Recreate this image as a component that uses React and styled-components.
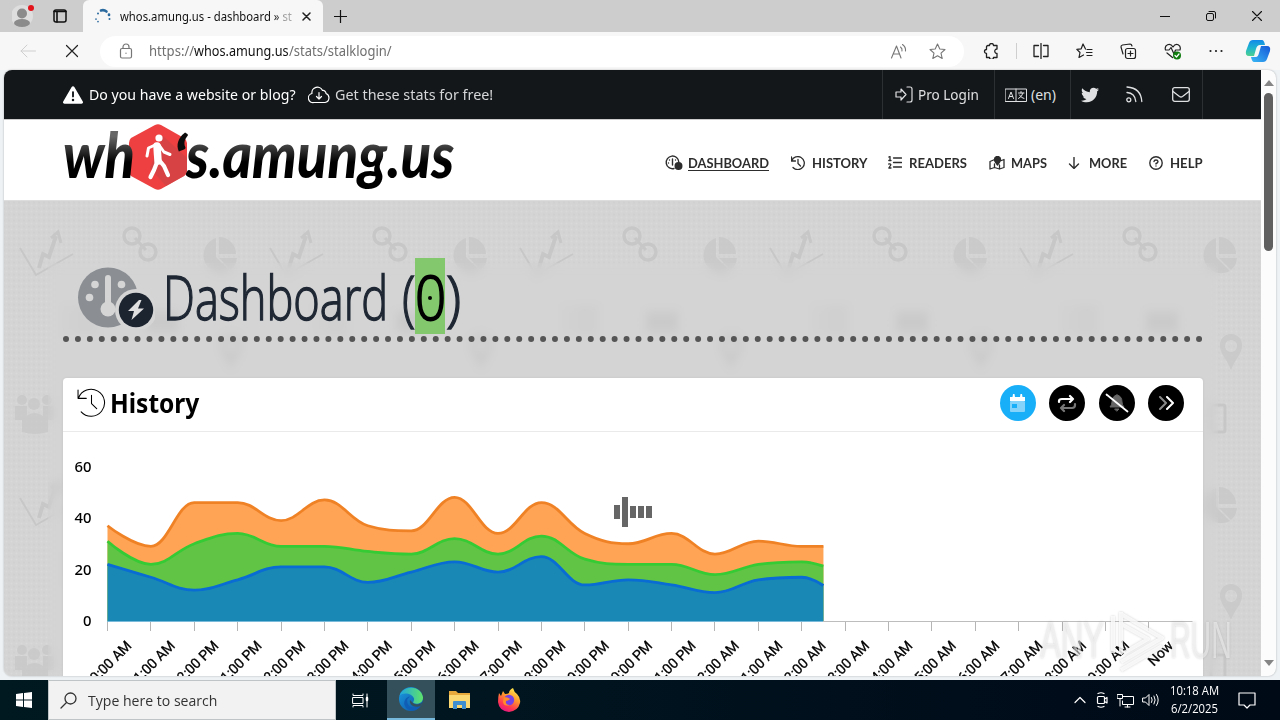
import React, { useLayoutEffect, useRef, useState } from "react";
import styled, { createGlobalStyle } from "styled-components";
import { FaTriangleExclamation, FaTwitter } from "react-icons/fa6";

const GlobalStyle = createGlobalStyle`
  * { box-sizing: border-box; }
  body { margin: 0; overflow: hidden; font-family: "Noto Sans", "Open Sans", sans-serif; }
  svg { display: block; flex: none; }
`;

/* ---------- text fitted to a given width ---------- */
const FitBox = styled.span`
  display: inline-block;
  flex: none;
  width: ${(p) => p.$w}px;
  white-space: nowrap;
`;
const FitInner = styled.span`
  display: inline-block;
  transform-origin: 0 50%;
`;
function Fit({ w, children, className }) {
  const ref = useRef(null);
  const [k, setK] = useState(1);
  useLayoutEffect(() => {
    setK(w / ref.current.offsetWidth);
  }, [w]);
  return (
    <FitBox $w={w} className={className}>
      <FitInner ref={ref} style={{ transform: `scaleX(${k})` }}>{children}</FitInner>
    </FitBox>
  );
}

const Ico = ({ w = 16, h = w, vb = `0 0 ${w} ${h}`, sw = 1, c = "currentColor", children }) => (
  <svg width={w} height={h} viewBox={vb} fill="none" stroke={c} strokeWidth={sw} strokeLinecap="round" strokeLinejoin="round">
    {children}
  </svg>
);

/* ---------- browser frame ---------- */
const Screen = styled.div`
  width: 1280px; height: 720px; overflow: hidden; position: relative;
  display: flex; flex-direction: column; background: #eff2f5;
`;
const TabStrip = styled.div`
  height: 32px; flex: none; background: #cdcdcd; display: flex; align-items: stretch;
`;
const StripLeft = styled.div`
  width: 83px; display: flex; align-items: center; padding-left: 12px; gap: 19px;
`;
const Tab = styled.div`
  width: 240px; background: #f7f7f7; border-radius: 6px 6px 0 0; display: flex; align-items: center;
  padding: 0 11px 0 11px; font-size: 12px; color: #111;
`;
const TabTitle = styled(Fit)`
  margin-left: 9px; margin-right: 10px;
  -webkit-mask-image: linear-gradient(90deg, #000 90%, rgba(0,0,0,.35) 96%);
`;
const StripRest = styled.div`
  flex: 1; display: flex; align-items: center; justify-content: space-between; padding: 0 18px 0 11px;
`;
const WinButtons = styled.div`display: flex; align-items: center; gap: 36px;`;
const Toolbar = styled.div`
  height: 38px; flex: none; background: #f7f7f7; display: flex; align-items: center; padding: 0 9px 0 20px;
`;
const NavButtons = styled.div`width: 80px; display: flex; gap: 29px; align-items: center; color: #222;`;
const Address = styled.div`
  width: 864px; height: 31px; border-radius: 16px; background: #fff; display: flex; align-items: center;
  padding: 0 18px 0 19px; color: #767676; font-size: 14px;
`;
const UrlPart = styled(Fit)`color: ${(p) => (p.$strong ? "#111" : "#6f6f6f")};`;
const Url = styled.div`display: flex; margin-left: 16px; margin-top: -1px;`;
const AddressTools = styled.div`margin-left: auto; display: flex; gap: 22px; align-items: center;`;
const ToolIcons = styled.div`flex: 1; display: flex; align-items: center; gap: 27px; padding-left: 19px; color: #222;`;
const ToolRule = styled.div`width: 1px; height: 16px; background: #cfcfcf; margin: 0 -11px 0 -10px;`;
const CopilotSlot = styled.span`margin-left: -5px;`;

/* ---------- page ---------- */
const Viewport = styled.div`
  height: 606px; margin: 0 4px 4px; flex: none; display: flex; border-radius: 8px; overflow: hidden; background: #fcfcfc;
  box-shadow: 0 0 2px rgba(0,0,0,.3);
`;
const Page = styled.div`width: 1257px; height: 606px; overflow: hidden; display: flex; flex-direction: column;`;
const Scrollbar = styled.div`
  width: 15px; display: flex; flex-direction: column; align-items: center; padding: 10px 0;
`;
const Thumb = styled.div`width: 9px; height: 158px; margin-top: 7px; border-radius: 5px; background: #606060;`;
const Arrow = styled.div`
  border: 5px solid transparent; border-top-width: 0; border-bottom: 6px solid #858585;
  ${(p) => p.$down && "transform: rotate(180deg); margin-top: auto;"}
`;
const TopBar = styled.div`
  height: 49px; flex: none; background: #13171a; color: #fff; display: flex; padding: 0 58px 0 59px; font-size: 14px;
`;
const Promo = styled.div`flex: 1; display: flex; align-items: center;`;
const PromoText = styled(Fit)`margin: 0 ${(p) => p.$mr || 0}px 0 ${(p) => p.$ml}px; color: ${(p) => p.$c};`;
const TopCell = styled.div`
  width: ${(p) => p.$w}px; border-left: 1px solid #2c3033; display: flex; align-items: center;
  padding-left: ${(p) => p.$pl}px; gap: ${(p) => p.$gap}px; color: #dfe0e1;
  ${(p) => p.$last && "border-right: 1px solid #2c3033;"}
`;
const Masthead = styled.div`
  height: 82px; flex: none; background: #fff; border-top: 1px solid #ccc; border-bottom: 1px solid #ddd;
  display: flex; justify-content: space-between; padding: 0 58px 0 59px;
`;
const Logo = styled.div`
  display: flex; align-items: flex-start; font: italic 900 62px/80px Lato, sans-serif; height: 80px; color: #000;
`;
const LogoText = styled(Fit)`
  margin-left: ${(p) => p.$ml || 0}px; margin-top: ${(p) => p.$mt || 0}px;
  & > span {
    background: linear-gradient(180deg, #666 28%, #000 ${(p) => p.$stop || 60}%); -webkit-background-clip: text; background-clip: text; color: transparent;
  }
`;
const LogoTick = styled.span`
  width: 12px; margin: 7px 0 0 -14px; height: 22px; font-size: 62px; line-height: 62px; position: relative;
  overflow: visible; display: flex; justify-content: center; color: #0c0c0c;
`;
const Hexagon = styled.div`
  width: 60px; height: 66px; margin: 4px 0 0 -7px; display: grid; place-items: center; color: #fff;
  & > * { grid-area: 1 / 1; }
`;
const Nav = styled.nav`
  display: flex; gap: 21.6px; align-items: center; font: 700 13.5px/18px Lato, sans-serif; color: #2d2d2d; padding-top: 5px;
`;
const NavItem = styled.div`display: flex; align-items: center;`;
const NavIcon = styled.span`width: ${(p) => p.$w}px;`;
const NavLabel = styled(Fit)`border-bottom: 1px solid ${(p) => (p.$active ? "#2d2d2d" : "transparent")}; line-height: 14px; padding-top: 1px;`;

const Body = styled.div`
  flex: 1; background: #d5d5d5; position: relative; display: flex; flex-direction: column; align-items: center; padding-top: 62px;
`;
const Backdrop = styled.svg`position: absolute; inset: 0;`;
const Container = styled.div`
  width: 1170px; height: 413px; overflow: visible; padding: 0 15px; backdrop-filter: blur(5px); position: relative; margin-right: -1px;
`;
const Title = styled.div`
  height: 84px; margin-top: -5px; border-bottom: 6px dotted #555; display: flex; align-items: flex-start;
  padding-left: 14px; font: 300 60px/76px "Open Sans", sans-serif; color: #1e2733;
`;
const TitleIcon = styled.span`margin-top: 9px;`;
const TitleWord = styled(Fit)`margin: 1px ${(p) => p.$mr}px 0 ${(p) => p.$ml}px; height: 70px; -webkit-text-stroke: 1.4px currentColor;`;
const Count = styled.span`
  width: 30px; height: 76px; background: #83c86d; color: #000; display: grid; justify-content: center;
  & > * { grid-area: 1 / 1; }
  &::after { content: ""; grid-area: 1 / 1; width: 4px; height: 4px; border-radius: 2px; background: #000; margin: 38px auto 0; }
`;
const CountDigit = styled(Fit)`height: 70px; margin-top: 1px; -webkit-text-stroke: 1.8px #000;`;
const Card = styled.div`
  margin-top: 36px; height: 330px; background: #fff; border-radius: 4px; box-shadow: 0 0 3px rgba(0,0,0,.08);
`;
const CardHead = styled.div`
  height: 54px; border-bottom: 1px solid #eaeaea; display: flex; align-items: center; padding: 0 19px 0 14px; gap: 4px;
`;
const HeadIcon = styled.span`margin-top: -5px;`;
const CardTitle = styled(Fit)`font: 700 27px/40px "Noto Sans", sans-serif; color: #000; margin-top: -3px;`;
const Actions = styled.div`margin-left: auto; display: flex; gap: 13.4px; margin-top: -3px;`;
const Round = styled.div`
  width: 36px; height: 36px; border-radius: 50%; background: ${(p) => p.$bg || "#000"}; display: grid; place-items: center; color: #fff;
`;
const Watermark = styled.div`
  position: absolute; left: 1040px; top: 608px; display: flex; align-items: center; height: 66px;
  font: 400 51px/66px "Liberation Sans", sans-serif; color: rgba(255,255,255,.5);
  text-shadow: 0 0 3px rgba(120,120,120,.32);
`;
const WatermarkMark = styled.svg`filter: drop-shadow(0 0 1px rgba(110,110,110,.4));`;

/* ---------- taskbar ---------- */
const Taskbar = styled.div`
  height: 40px; flex: none; background: linear-gradient(90deg, #001820 0, #00151f 40%, #000d1a 75%, #000a17); display: flex; color: #fff;
`;
const TaskButton = styled.div`
  width: ${(p) => p.$w || 49}px; display: grid; place-items: center;
  ${(p) => p.$active && "background: #34505b; border-bottom: 2px solid #76b9dd;"}
`;
const Search = styled.div`
  width: 288px; background: #f2f2f2; border: 1px solid #bfc4c6; display: flex; align-items: center; padding-left: 11px; gap: 11px; color: #333;
  font: 14.5px "Open Sans", sans-serif;
`;
const Tray = styled.div`margin-left: auto; display: flex; align-items: center; padding-right: 24px;`;
const TrayIcons = styled.div`display: flex; align-items: center; gap: 8px; margin-right: 9px;`;
const Clock = styled.div`
  width: 50px; margin-right: 19px; display: flex; flex-direction: column; align-items: center; font: 12px/18px "Open Sans", sans-serif;
`;

/* ---------- chart ---------- */
const STEP = 43.39, X0 = 107.5, Y0 = 621, UNIT = 2.575;
const orange = [37, 29, 46, 46, 39, 47, 37, 35, 48, 34, 46, 34, 30, 34, 26, 31, 29, 29];
const green = [31, 22, 30, 34, 29, 29, 27, 26, 32, 26, 33, 24, 22, 22, 18, 22, 23, 21.3];
const blue = [22, 17, 12, 16, 21, 21, 15, 19, 23, 19, 25, 14, 16, 14, 11, 16, 17, 13.8];
const hours = ["10:00 AM", "11:00 AM", "12:00 PM", "1:00 PM", "2:00 PM", "3:00 PM", "4:00 PM", "5:00 PM", "6:00 PM", "7:00 PM",
  "8:00 PM", "9:00 PM", "10:00 PM", "11:00 PM", "12:00 AM", "1:00 AM", "2:00 AM", "3:00 AM", "4:00 AM", "5:00 AM", "6:00 AM",
  "7:00 AM", "8:00 AM", "9:00 AM", "Now"];

function spline(values) {
  const pts = values.map((v, i) => ({ x: X0 + STEP * (i === 17 ? 16.5 : i), y: Y0 - v * UNIT }));
  let d = `M${pts[0].x} ${pts[0].y}`;
  let prevR = pts[0];
  for (let i = 1; i < pts.length; i++) {
    const p = pts[i], a = pts[i - 1], b = pts[i + 1];
    let l = p, r = p;
    if (b) {
      l = { x: (1.5 * p.x + a.x) / 2.5, y: (1.5 * p.y + a.y) / 2.5 };
      r = { x: (1.5 * p.x + b.x) / 2.5, y: (1.5 * p.y + b.y) / 2.5 };
      const c = ((r.y - l.y) * (r.x - p.x)) / (r.x - l.x) + p.y - r.y;
      l.y += c; r.y += c;
      if (l.y > a.y && l.y > p.y) { l.y = Math.max(a.y, p.y); r.y = 2 * p.y - l.y; }
      else if (l.y < a.y && l.y < p.y) { l.y = Math.min(a.y, p.y); r.y = 2 * p.y - l.y; }
      if (r.y > b.y && r.y > p.y) { r.y = Math.max(b.y, p.y); l.y = 2 * p.y - r.y; }
      else if (r.y < b.y && r.y < p.y) { r.y = Math.min(b.y, p.y); l.y = 2 * p.y - r.y; }
    }
    d += `C${prevR.x} ${prevR.y} ${l.x} ${l.y} ${p.x} ${p.y}`;
    prevR = r;
  }
  return d;
}
function Series({ values, fill, line }) {
  const d = spline(values);
  return (
    <g>
      <path d={`${d}V${Y0}H${X0}Z`} fill={fill} />
      <path d={d} fill="none" stroke={line} strokeWidth="2.8" />
    </g>
  );
}
function Chart() {
  return (
    <svg width="1140" height="276" viewBox="63 432 1140 276">
      <Series values={orange} fill="#ffa355" line="#f08226" />
      <Series values={green} fill="#61c445" line="#35cb35" />
      <Series values={blue} fill="#1a88b5" line="#086cd4" />
      <path d="M107 621.5H1192.5" stroke="#bdbdbd" />
      <path d="M107 621.5H823" stroke="#79b9da" />
      {hours.map((_, i) => <path key={i} d={`M${Math.floor(X0 + i * STEP) + 0.5} 622V631`} stroke="#b5b5b5" />)}
      {[60, 40, 20, 0].map((v) => (
        <text key={v} x="91.5" y={Y0 - v * UNIT + 5} textAnchor="end" fontFamily="Noto Sans" fontSize="14" fontWeight="500" textLength={v ? 17 : 8.5} lengthAdjust="spacingAndGlyphs">{v}</text>
      ))}
      {hours.map((h, i) => (
        <text key={i} transform={`translate(${X0 + i * STEP + 25} 646.5) rotate(-45)`} textAnchor="end" fontFamily="Roboto" fontSize="14" fontWeight="400" stroke="#000" strokeWidth=".3">{h}</text>
      ))}
      <g fill="#666">
        <rect x="614" y="505" width="6" height="14" />
        <rect x="622" y="497" width="6" height="30" />
        <rect x="630" y="506" width="6" height="12" />
        <rect x="638" y="506" width="6" height="12" />
        <rect x="646" y="506" width="6" height="12" />
      </g>
    </svg>
  );
}

function BodyPattern() {
  return (
    <Backdrop width="1257" height="476" viewBox="4 201 1257 476">
      <defs>
        <pattern id="dots" width="5" height="6" patternUnits="userSpaceOnUse">
          <rect width="5" height="6" fill="#d4d4d4" />
          <circle cx="1.5" cy="1.5" r="1.1" fill="#d9d9d9" />
          <circle cx="4" cy="4.5" r="1.1" fill="#d0d0d0" />
        </pattern>
        <pattern id="tile" x="-1" y="200" width="250" height="250" patternUnits="userSpaceOnUse">
          <g fill="none" stroke="#c3c3c3" strokeWidth="2">
            <path d="M21 48L37 75L74 54" />
            <path d="M40 68L44 54L50 57L57 36" strokeWidth="4" />
            <path d="M52 38L59 32L62 43" strokeWidth="3" />
            <circle cx="133" cy="36" r="8" strokeWidth="3.5" />
            <circle cx="149" cy="52" r="8" strokeWidth="3.5" />
            <path d="M136 38L147 50" strokeWidth="3" />
          </g>
          <g fill="#c7c7c7">
            <path d="M217 57V38A18 18 0 1 0 231 71Z" />
            <path d="M220 37A17 17 0 0 1 237 54H220Z" />
            <path d="M220 58H238A17 17 0 0 1 232 70Z" />
            <path d="M232 134a11 11 0 0 1 11 12c0 8-7 13-11 24c-4-11-11-16-11-24a11 11 0 0 1 11-12zm0 6a6 6 0 1 0 .1 0z" fillRule="evenodd" />
            <path d="M147 112h32v20h-32z" />
            <path d="M65 108h6v4h-6zM75 108h24v4H75zM65 118h6v4h-6zM75 118h24v4H75zM65 128h6v4h-6zM75 128h24v4H75z" />
            <circle cx="23" cy="200" r="5" /><circle cx="35" cy="204" r="6" /><circle cx="48" cy="200" r="5" />
            <path d="M16 206h12v14H16zM44 206h11v14H44zM23 220q12-14 26 0v12q-13 4-26 0z" />
          </g>
          <rect x="212" y="205" width="14" height="27" rx="2" fill="none" stroke="#c3c3c3" strokeWidth="3" />
        </pattern>
      </defs>
      <rect x="4" y="200" width="1257" height="477" fill="url(#dots)" />
      <rect x="4" y="200" width="1257" height="477" fill="url(#tile)" opacity=".75" />
    </Backdrop>
  );
}

const HistoryGlyph = ({ s, sw }) => (
  <Ico w={s} vb="0 0 28 28" sw={sw}>
    <path d="M1 2V10H9M1.5 9.5A13 13 0 1 1 4 23M14 7V15L19 20" />
  </Ico>
);

const GaugeIcon = () => (
  <svg width="78" height="62" viewBox="77 267 78 62">
    <circle cx="108" cy="297.500" r="30" fill="#8b8f94" />
    <g fill="#d5d5d5">
      <circle cx="95" cy="284.500" r="3.8" /><circle cx="121.500" cy="284.500" r="3.800" /><circle cx="89.500" cy="297.500" r="3.800" />
      <circle cx="108" cy="309" r="7.500" /><rect x="105" y="275" width="6" height="32" rx="3" />
      <circle cx="136" cy="310" r="21" />
    </g>
    <circle cx="136" cy="310" r="17.200" fill="#1c2430" />
    <path d="M139 300L128 311H134L131.500 320L144 308.500H138L141.500 300Z" fill="#e0e0e0" />
  </svg>
);

const EdgeLogo = () => (
  <svg width="26" height="26" viewBox="0 0 26 26">
    <defs>
      <linearGradient id="e1" x1="0" x2="1"><stop offset="0" stopColor="#1fa5e0" /><stop offset="1" stopColor="#5fe36a" /></linearGradient>
      <linearGradient id="e2" x1="0" y1="0" x2="1" y2="1"><stop offset="0" stopColor="#1b9de2" /><stop offset="1" stopColor="#0d4da0" /></linearGradient>
    </defs>
    <circle cx="13" cy="13" r="12" fill="url(#e2)" />
    <path d="M1.500 10C4 0 22 -2 25 11C25.500 18 18 18.500 15.500 17C14.500 16 16.500 15 16 12.500C14 7 5 6 1.500 10Z" fill="url(#e1)" />
    <path d="M9.500 13C8 19 13 24 22 20.500C18 26 9 26 6.500 19C5.500 15 8 11 12 10.500Z" fill="#0f5db5" />
    <path d="M15 17C17 19 21 19 25 16.500L22.500 20C16 22 11 19 12 14Z" fill="#34505b" />
  </svg>
);

export default function App() {
  return (
    <Screen>
      <GlobalStyle />
      <TabStrip>
        <StripLeft>
          <svg width="22" height="24" viewBox="0 0 22 24">
            <circle cx="10" cy="12" r="11" fill="#dedede" />
            <circle cx="10" cy="9.500" r="5" fill="#8b8b8b" />
            <ellipse cx="10" cy="19" rx="8" ry="4" fill="#8b8b8b" />
            <circle cx="19" cy="4" r="3" fill="#e3131c" />
          </svg>
          <Ico w={14} sw={1.500} c="#111"><rect x="1" y="1" width="12" height="12" rx="2" /><path d="M1 2.500H13M4 3V13" strokeWidth="1.600" /></Ico>
        </StripLeft>
        <Tab>
          <svg width="17" height="16" viewBox="0 0 17 16" fill="none" stroke="#2b6a9f" strokeLinecap="round">
            <path d="M7 2.500Q10 1.500 12.500 3.500" strokeWidth="2.600" /><path d="M15 6.500V7" strokeWidth="2.600" />
            <path d="M15.500 11V11.100M4 5.500V5.600" strokeWidth="2" /><path d="M2 11V11.100M4 13.500V13.600" strokeWidth="1.700" />
          </svg>
          <TabTitle w={172}>whos.amung.us - dashboard » st</TabTitle>
          <Ico w={9} sw={1.500} c="#222"><path d="M1 1L8 8M8 1L1 8" /></Ico>
        </Tab>
        <StripRest>
          <Ico w={13} sw={1.200} c="#111"><path d="M6.500 0V13M0 6.500H13" /></Ico>
          <WinButtons>
            <Ico w={10} c="#111"><path d="M0 5.500H10" /></Ico>
            <Ico w={10} c="#111"><rect x=".5" y="2.500" width="7" height="7" rx="1.500" /><path d="M3 .5H8Q9.500 .5 9.500 2V7" /></Ico>
            <Ico w={10} c="#111" sw={1.100}><path d="M.5 .5L9.500 9.500M9.500 .5L.5 9.500" /></Ico>
          </WinButtons>
        </StripRest>
      </TabStrip>

      <Toolbar>
        <NavButtons>
          <Ico w={16} c="#cfcfcf"><path d="M15.500 8H1M7 2L1 8L7 14" /></Ico>
          <Ico w={14} sw={1.200}><path d="M1.500 1.500L12.500 12.500M12.500 1.500L1.500 12.500" /></Ico>
        </NavButtons>
        <Address>
          <Ico w={14} h={16} sw={1.200}><rect x="1.500" y="5.500" width="11" height="9.500" rx="1.500" /><path d="M4 5.500V4A3 3 0 0 1 10 4V5.500M7 10V10.300" /></Ico>
          <Url>
            <UrlPart w={45}>https://</UrlPart>
            <UrlPart w={95} $strong>whos.amung.us</UrlPart>
            <UrlPart w={103}>/stats/stalklogin/</UrlPart>
          </Url>
          <AddressTools>
            <Ico w={17} sw={1.100}><path d="M1.500 15L6.500 3L11 15M3 11H9.500M10.500 4Q12.500 5.500 12 8M12.500 1.500Q16 4 15.500 8" /></Ico>
            <Ico w={17} sw={1.100}><path d="M8.500 1L10.800 6L16 6.500L12 10.200L13.200 15.500L8.500 12.800L3.800 15.500L5 10.200L1 6.500L6.200 6Z" /></Ico>
          </AddressTools>
        </Address>
        <ToolIcons>
          <Ico w={16} sw={1.300}><path d="M5 2.500H6.500A2 2 0 0 1 10.500 2.500H14V6A2 2 0 1 0 14 10.500V14.500H10.500A2 2 0 0 1 6.500 14.500H3.500V10.500A2 2 0 1 1 3.500 6.500V4Q3.500 2.500 5 2.500Z" /></Ico>
          <ToolRule />
          <Ico w={16} sw={1.300}><path d="M5.500 2.500H1V13.500H5.500M10.500 2.500H15V13.500H10.500M8 .5V15.500" /></Ico>
          <Ico w={17} h={16} sw={1.200}><path d="M9.500 6L7 1L5.200 5.800L.8 6.300L4 9.500L3 14.500L7.500 12M11 6.500H16M10.500 9.500H16M11 12.500H16" /></Ico>
          <Ico w={17} h={17} sw={1.200}><rect x="5.500" y="5.500" width="10" height="10" rx="2" /><path d="M3 11L1 4Q.8 2.500 2.500 2L10 1Q11.500 1 12 3M10.500 8V13M8 10.500H13" /></Ico>
          <Ico w={18} h={17} sw={1.200}><path d="M9 4C6 -1 0 2 1.500 7H5L7 4.500L10 11L11.500 7H16C17.500 2 12 -1 9 4M3 10L8.500 14.500" /><circle cx="13" cy="12.500" r="4" fill="#107c10" stroke="none" /><path d="M11 12.500L12.500 14L15 11" stroke="#fff" /></Ico>
          <Ico w={14} h={4} sw={2.200}><path d="M1.500 2V2.010M7 2V2.010M12.500 2V2.010" /></Ico>
          <CopilotSlot>
            <svg width="26" height="24" viewBox="0 0 26 24">
              <defs>
                <linearGradient id="cp1" x1="0" y1="0" x2="0" y2="1"><stop offset="0" stopColor="#1389e8" /><stop offset=".5" stopColor="#1fb5cf" /><stop offset="1" stopColor="#4ed08f" /></linearGradient>
                <linearGradient id="cp2" x1="0" y1="1" x2="1" y2="0"><stop offset="0" stopColor="#39b9f5" /><stop offset="1" stopColor="#1557d8" /></linearGradient>
              </defs>
              <path d="M8 1H17Q19 1 20 6H15Q12 6 11 10L9 17H4Q0 17 1 12L4 4Q5 1 8 1Z" fill="url(#cp1)" />
              <path d="M18 23H9Q7 23 6 18H11Q13 18 14 14L16 7H22Q26 7 25 12L22 20Q21 23 18 23Z" fill="url(#cp2)" />
            </svg>
          </CopilotSlot>
        </ToolIcons>
      </Toolbar>

      <Viewport>
        <Page>
          <TopBar>
            <Promo>
              <FaTriangleExclamation size={20} />
              <PromoText w={207} $ml={6} $mr={12} $c="#fff">Do you have a website or blog?</PromoText>
              <Ico w={22} h={18} sw={1.200}><path d="M6 16.500H17A4.700 4.700 0 0 0 18 7.500A3 3 0 0 0 14.500 4.500A5.500 5.500 0 0 0 4 7.500A4.600 4.600 0 0 0 6 16.500ZM11 6.500V13M8.500 10.500L11 13L13.500 10.500" /></Ico>
              <PromoText w={158} $ml={5} $c="#d5d6d7">Get these stats for free!</PromoText>
            </Promo>
            <TopCell $w={112} $pl={12} $gap={5}>
              <Ico w={18} h={17} sw={1.200}><path d="M1 6H6V3L11 8.500L6 14V11H1ZM12 1H15Q17 1 17 3V14Q17 16 15 16H12" /></Ico>
              <Fit w={61}>Pro Login</Fit>
            </TopCell>
            <TopCell $w={76} $pl={10} $gap={4}>
              <Ico w={22} h={14}><path d="M.5 1H21.500V13.500H.5ZM11 1V13.500M3.500 10.500L6 4L8.500 10.500M4.500 8.500H7.500M13.500 5H19M16 3.500V5M18 5Q17 9 13.500 10.500M14.500 7Q16 10 19 10.500" /></Ico>
              <Fit w={25}>(en)</Fit>
            </TopCell>
            <TopCell $w={133} $pl={10} $gap={27} $last>
              <FaTwitter size={18} />
              <Ico w={17} sw={1.300}><circle cx="2.800" cy="13.800" r="2" /><path d="M1 6.500Q9 7 9.800 15.500M1 1Q15 2 15.800 15.500" /></Ico>
              <Ico w={20} h={15} vb="-2 0 20 15" sw={1.300}><rect x=".7" y=".7" width="16.600" height="13.600" rx="2" /><path d="M1 4.500L7.500 9.500Q9 10.500 10.500 9.500L17 4.500" /></Ico>
            </TopCell>
          </TopBar>

          <Masthead>
            <Logo>
              <LogoText w={72} $mt={-6}>wh</LogoText>
              <Hexagon>
                <svg width="60" height="66" viewBox="0 0 60 66">
                  <path d="M27 1Q30 -.5 33 1L56 14Q59 16 59 19V47Q59 50 56 52L33 65Q30 66.500 27 65L3 52Q1 50 1 47V19Q1 16 3 14Z" fill="#ee4040" />
                  <path d="M35 12L59 34V47Q59 50 56 52L38 62L22 44Z" fill="#cf4446" opacity=".75" />
                </svg>
                <Ico w={28} h={46} sw={4.500}>
                  <circle cx="15" cy="4" r="3.600" fill="#fff" stroke="none" />
                  <path d="M13 12L14 27" strokeWidth="7.500" />
                  <path d="M11 11L4.500 14L3 22M15 11L20 18L26 20.500" strokeWidth="3" />
                  <path d="M13.500 27L10 36L6.500 43M15 26L20 32L24 41" strokeWidth="4.200" />
                </Ico>
              </Hexagon>
              <LogoTick>‘</LogoTick>
              <LogoText w={268} $mt={-6}>s.amung.us</LogoText>
            </Logo>
            <Nav>
              <NavItem>
                <NavIcon $w={23}><Ico w={18} h={15} sw={1.400}><path d="M9 13.500A6.300 6.300 0 1 1 13.800 7M7.500 4V10M4.500 5V5.010M3.500 8V8.010M10.500 5V5.010" /><circle cx="13.500" cy="11" r="3.300" fill="#2d2d2d" /></Ico></NavIcon>
                <NavLabel w={81} $active>DASHBOARD</NavLabel>
              </NavItem>
              <NavItem><NavIcon $w={21}><HistoryGlyph s={14} sw={2.600} /></NavIcon><NavLabel w={55}>HISTORY</NavLabel></NavItem>
              <NavItem>
                <NavIcon $w={21}><Ico w={14} h={13} sw={1.300}><path d="M5.500 2H13.500M5.500 6.500H13.500M5.500 11H13.500M.8 1L2 .5V4.500M.8 4.500H3M.8 8Q3 7.500 2.800 9L.8 12H3" /></Ico></NavIcon>
                <NavLabel w={58}>READERS</NavLabel>
              </NavItem>
              <NavItem>
                <NavIcon $w={22}><Ico w={16} h={14} sw={1.300}><path d="M4.500 4L1 5.500V13L5.500 11.500L10.500 13L15 11.500V3.500L12.500 4.500M5.500 8V11.500M10.500 9V13" /><path d="M8.500 9Q5 5 5.500 3.500A3 3 0 0 1 11.500 3.500Q12 5 8.500 9Z" fill="#2d2d2d" /></Ico></NavIcon>
                <NavLabel w={36}>MAPS</NavLabel>
              </NavItem>
              <NavItem><NavIcon $w={21}><Ico w={12} h={12} sw={1.400}><path d="M6 .5V11M1.500 7L6 11.500L10.500 7" /></Ico></NavIcon><NavLabel w={38}>MORE</NavLabel></NavItem>
              <NavItem>
                <NavIcon $w={21}><Ico w={14} sw={1.400}><circle cx="7" cy="7" r="6.200" /><path d="M5 5.500Q5.200 4 7 4T9 5.500Q9 7 7 7.500V8M7 10V10.100" /></Ico></NavIcon>
                <NavLabel w={33}>HELP</NavLabel>
              </NavItem>
            </Nav>
          </Masthead>

          <Body>
            <BodyPattern />
            <Container>
              <Title>
                <TitleIcon><GaugeIcon /></TitleIcon>
                <TitleWord w={225} $ml={8} $mr={14}>Dashboard</TitleWord>
                <TitleWord w={13} $ml={0} $mr={0}>(</TitleWord>
                <Count><CountDigit w={31}>0</CountDigit></Count>
                <TitleWord w={15} $ml={1} $mr={0}>)</TitleWord>
              </Title>
              <Card>
                <CardHead>
                  <HeadIcon><HistoryGlyph s={29} sw={1} /></HeadIcon>
                  <CardTitle w={89}>History</CardTitle>
                  <Actions>
                    <Round $bg="#19aff8">
                      <svg width="17" height="19" viewBox="0 0 17 19"><path d="M1 3H3.500L4 0H5.500L6 3H11L11.500 0H13L13.500 3H16V7H1Z" fill="#fff" /><rect x="1" y="7" width="15" height="11" rx="1" fill="#85d3fb" /><rect x="3" y="10" width="5" height="4" fill="#19aff8" /></svg>
                    </Round>
                    <Round><Ico w={20} sw={2.200}><path d="M2 9V8Q2 6 5 6H16M13 3L16 6L13 9" /><path d="M18 11V12Q18 15 15 15H4M7 12L4 15L7 18" stroke="#777" /></Ico></Round>
                    <Round><Ico w={24} h={20} sw={1.800}><path d="M12 2Q7 3 7 9Q7 12 5 14H19Q17 12 17 9Q17 3 12 2ZM10 16H14L12 18Z" fill="#666" stroke="#666" strokeWidth="1" /><path d="M1.500 1.500L22.500 18.500" /></Ico></Round>
                    <Round><Ico w={18} h={14} sw={2}><path d="M3 1L9 7L3 13" stroke="#888" /><path d="M10 1L16 7L10 13" /></Ico></Round>
                  </Actions>
                </CardHead>
                <Chart />
              </Card>
            </Container>
          </Body>
        </Page>
        <Scrollbar><Arrow /><Thumb /><Arrow $down /></Scrollbar>
      </Viewport>

      <Taskbar>
        <TaskButton $w={48}><svg width="16" height="16" viewBox="0 0 16 16" fill="#fff"><path d="M0 2L7 1V7.500H0ZM8 .9L16 0V7.500H8ZM0 8.500H7V15L0 14ZM8 8.500H16V16L8 15Z" /></svg></TaskButton>
        <Search>
          <Ico w={17} sw={1.300}><circle cx="10.500" cy="6.500" r="5.500" /><path d="M6.500 10.500L1 16" /></Ico>
          <Fit w={129}>Type here to search</Fit>
        </Search>
        <TaskButton $w={51}><Ico w={20} h={15} vb="0 0 20 15"><path d="M1 1V2.500H11V1M1 14V12.500H11V14M1 4.500H11V10.500H1ZM15 1V14" /><path d="M15 5V7" strokeWidth="2.500" /></Ico></TaskButton>
        <TaskButton $w={48} $active><EdgeLogo /></TaskButton>
        <TaskButton>
          <svg width="23" height="20" viewBox="0 0 23 20"><path d="M1 1H8L10 3H22V18H1Z" fill="#e7a83c" /><path d="M1 5H22V18H1Z" fill="#fbd872" /><path d="M5 19V12Q5 11 6 11H17Q18 11 18 12V19H14V15H9V19Z" fill="#3f8fd0" /></svg>
        </TaskButton>
        <TaskButton>
          <svg width="24" height="24" viewBox="0 0 24 24">
            <defs><linearGradient id="ff" x1=".8" y1="0" x2=".3" y2="1"><stop offset="0" stopColor="#fff14f" /><stop offset=".4" stopColor="#ff9a2e" /><stop offset=".75" stopColor="#ff3850" /><stop offset="1" stopColor="#e31587" /></linearGradient></defs>
            <path d="M2 5L4 8L6 3L8 6Q11 6 12 5Q12 2 16 0Q17 4 20 6Q24 10 23 15Q21 23 12 24Q2 23 1 14Q1 9 2 5Z" fill="url(#ff)" />
            <circle cx="12" cy="12" r="5.200" fill="#7542e5" /><path d="M7 9Q11 9 13 11Q11 13 9 13Q8 17 13 17Q6 19 6 13Z" fill="#ff8a2b" />
          </svg>
        </TaskButton>
        <Tray>
          <TrayIcons>
            <Ico w={12} h={8} sw={1.200}><path d="M1 6.500L6 1.500L11 6.500" /></Ico>
            <Ico w={15} h={16} sw={1.200}><rect x="3.500" y="4.500" width="7" height="7" rx="1" /><path d="M10.500 7L13 5.500V11L10.500 9.500M4 1.500Q7 0 10 1.500M4 14.500Q7 16 10 14.500" /></Ico>
            <Ico w={17} h={15}><path d="M6 3.500H16.500V11.500H5.500V8M8 14H13M10.500 11.500V14M.5 1.500H5.500V5.500H.5ZM3 5.500V13" /></Ico>
            <Ico w={18} h={14}><path d="M1 5H3.500L7 1.500V12.500L3.500 9H1ZM9.500 4.500Q11 7 9.500 9.500M12 3Q14.500 7 12 11M14.500 1.500Q18 7 14.500 12.500" /></Ico>
          </TrayIcons>
          <Clock><Fit w={49}>10:18 AM</Fit><Fit w={47}>6/2/2025</Fit></Clock>
          <Ico w={18} h={17} sw={1.200}><path d="M1 1H17V13H12L9 16L6 13H1Z" /></Ico>
        </Tray>
      </Taskbar>

      <Watermark>
        <Fit w={64}>ANY</Fit>
        <WatermarkMark width="66" height="66" viewBox="0 0 66 66" fill="none" stroke="#fff" strokeOpacity=".8" strokeWidth="4">
          <path d="M9 8V45M17 4V46M17 6L58 30L17 54M17 16L44 31L20 45M17 62L58 38" strokeLinejoin="round" />
        </WatermarkMark>
        <Fit w={62}>RUN</Fit>
      </Watermark>
    </Screen>
  );
}
